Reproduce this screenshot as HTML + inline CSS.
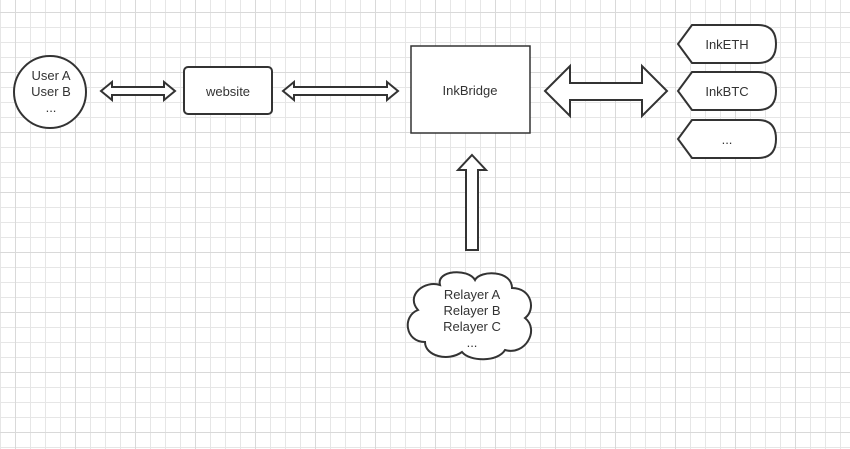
<!DOCTYPE html>
<html><head><style>
html,body{margin:0;padding:0;background:#fff;}
svg{display:block;}
text{font-family:"Liberation Sans",sans-serif;font-size:13px;fill:#333;}
</style></head><body>
<svg width="850" height="449" xmlns="http://www.w3.org/2000/svg">
<defs>
<pattern id="g" x="0" y="12" width="15" height="15" patternUnits="userSpaceOnUse">
<path d="M0.5 0V15M0 0.5H15" stroke="#e6e6e6" stroke-width="1" fill="none"/>
</pattern>
<pattern id="G" x="15" y="12" width="60" height="60" patternUnits="userSpaceOnUse">
<path d="M0.5 0V60M0 0.5H60" stroke="#d9d9d9" stroke-width="1" fill="none"/>
</pattern>
</defs>
<rect width="850" height="449" fill="url(#g)"/>
<rect width="850" height="449" fill="url(#G)"/>
<g fill="#fff" stroke="#333" stroke-width="2" stroke-linejoin="miter">
<circle cx="50" cy="92" r="36"/>
<path d="M101 91 L112 82 L112 87 L164 87 L164 82 L175 91 L164 100 L164 95 L112 95 L112 100 Z"/>
<rect x="184" y="67" width="88" height="47" rx="4"/>
<path d="M283 91 L294 82 L294 87 L387 87 L387 82 L398 91 L387 100 L387 95 L294 95 L294 100 Z"/>
<rect x="411" y="46" width="119" height="87" stroke-width="1.5"/>
<path d="M545 91 L570 66 L570 83 L642 83 L642 66 L667 91 L642 116 L642 100 L570 100 L570 116 Z"/>
<path d="M692 25 L758 25 Q776 25 776 44 Q776 63 758 63 L692 63 L678 44 Z"/>
<path d="M692 72 L758 72 Q776 72 776 91 Q776 110 758 110 L692 110 L678 91 Z"/>
<path d="M692 120 L758 120 Q776 120 776 139 Q776 158 758 158 L692 158 L678 139 Z"/>
<path d="M472 155 L486 170 L478 170 L478 250 L466 250 L466 170 L458 170 Z"/>
<path d="M440 285 C436 270,468 268,475 280 C480 270,512 270,512 288 C532 288,536 310,525 318 C540 330,525 356,505 350 C498 362,470 362,462 352 C448 362,425 356,425 342 C405 342,402 316,418 310 C405 295,425 280,440 285 Z"/>
</g>
<g text-anchor="middle">
<text x="51" y="80">User A</text>
<text x="51" y="96">User B</text>
<text x="51" y="112">...</text>
<text x="228" y="96">website</text>
<text x="470" y="95">InkBridge</text>
<text x="727" y="49">InkETH</text>
<text x="727" y="96">InkBTC</text>
<text x="727" y="144">...</text>
<text x="472" y="299">Relayer A</text>
<text x="472" y="315">Relayer B</text>
<text x="472" y="331">Relayer C</text>
<text x="472" y="347">...</text>
</g>
</svg>
</body></html>
